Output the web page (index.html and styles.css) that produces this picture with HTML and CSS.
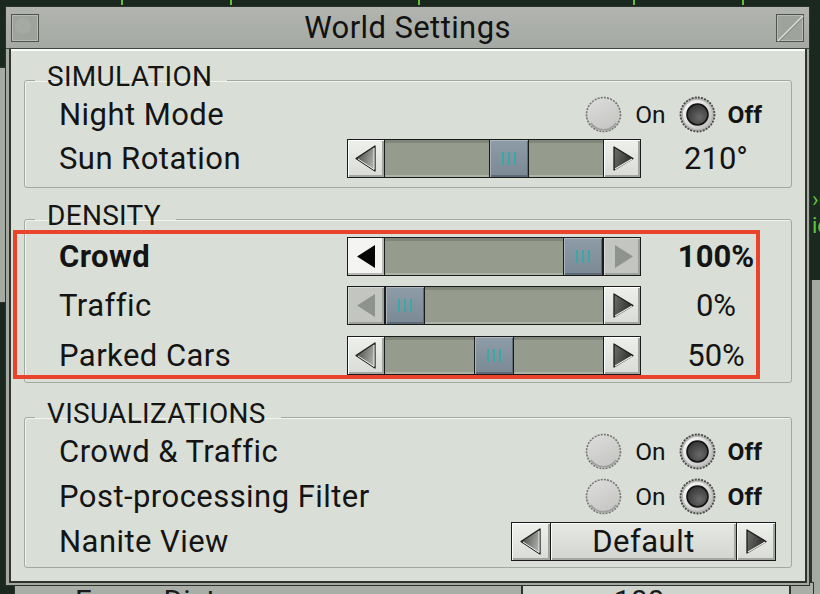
FILE: index.html
```html
<!DOCTYPE html>
<html lang="en">
<head>
<meta charset="utf-8">
<title>World Settings</title>
<link rel="stylesheet" href="styles.css">
</head>
<body>
<svg class="defs" width="0" height="0" aria-hidden="true">
  <defs>
    <linearGradient id="gl" x1="0" y1="0" x2="1" y2="0.4">
      <stop offset="0" stop-color="#3a3b39"/>
      <stop offset="1" stop-color="#a9aba7"/>
    </linearGradient>
    <linearGradient id="gr" x1="0" y1="0" x2="1" y2="0.3">
      <stop offset="0" stop-color="#6e706c"/>
      <stop offset="1" stop-color="#2e2f2d"/>
    </linearGradient>
    <radialGradient id="gdot" cx="0.6" cy="0.65" r="0.7">
      <stop offset="0" stop-color="#6a6a6a"/>
      <stop offset="1" stop-color="#323232"/>
    </radialGradient>
    <linearGradient id="gring" x1="0" y1="0" x2="1" y2="1">
      <stop offset="0" stop-color="#ffffff"/>
      <stop offset="1" stop-color="#b9b9b7"/>
    </linearGradient>
    <linearGradient id="goff" x1="0" y1="0" x2="0.6" y2="1">
      <stop offset="0" stop-color="#dededc"/>
      <stop offset="1" stop-color="#c6c6c4"/>
    </linearGradient>
  </defs>
</svg>

<div class="bg-top"><span class="tick t1"></span><span class="tick t2"></span><span class="tick t3"></span><span class="tick t4"></span><span class="tick t5"></span></div>
<div class="bg-win bg-left"></div>
<div class="bg-win bg-right"><span class="bg-green g1">›(</span><span class="bg-green g2">ie</span></div>
<div class="bg-win bg-bottom"><span class="bg-label">Focus Distance</span><span class="bg-box">100 m</span></div>

<div class="window">
  <div class="titlebar">
    <span class="tb-btn">
      <svg width="28" height="28" viewBox="0 0 28 28"><rect x="0.5" y="0.5" width="27" height="27" fill="#9ea39c" stroke="#50544f"/><rect x="1.5" y="1.5" width="25" height="25" fill="none" stroke="#b7bbb5"/><circle cx="12" cy="12" r="8" fill="#a5aaa3"/></svg>
    </span>
    <span class="title">World Settings</span>
    <span class="tb-btn">
      <svg width="28" height="28" viewBox="0 0 28 28"><rect x="0.5" y="0.5" width="27" height="27" fill="#9ea39c" stroke="#50544f"/><rect x="1.5" y="1.5" width="25" height="25" fill="none" stroke="#b7bbb5"/><line x1="2" y1="27" x2="27" y2="2" stroke="#dfe2dd" stroke-width="1.6"/><line x1="3" y1="27.5" x2="27.5" y2="3" stroke="#6c706b" stroke-width="0.8"/></svg>
    </span>
  </div>

  <div class="panel">
    <fieldset class="group group-sim">
      <legend>SIMULATION</legend>
      <div class="row row-radio first">
        <span class="label">Night Mode</span>
        <div class="radios">
          <svg class="radio" width="37" height="37" viewBox="0 0 37 37"><circle cx="18.5" cy="18.5" r="17" fill="url(#goff)" stroke="#767674" stroke-width="1.6" stroke-dasharray="2 1.2"/><path d="M6 27 A15 15 0 0 0 31 27" fill="none" stroke="#9f9f9d" stroke-width="1.5"/></svg>
          <span class="opt">On</span>
          <svg class="radio" width="37" height="37" viewBox="0 0 37 37"><circle cx="18.5" cy="18.5" r="17" fill="#b8b8b6" stroke="#4a4a48" stroke-width="1.8" stroke-dasharray="2 1.2"/><circle cx="18.5" cy="18.5" r="14.5" fill="url(#gring)"/><circle cx="18.5" cy="18.5" r="10.5" fill="url(#gdot)" stroke="#141414" stroke-width="1.6"/></svg>
          <span class="opt sel">Off</span>
        </div>
      </div>
      <div class="row row-slider">
        <span class="label">Sun Rotation</span>
        <div class="slider">
          <span class="sbtn"><svg width="37" height="37" viewBox="0 0 37 37"><polygon points="27,6 8,18.5 27,31" fill="url(#gl)" stroke="#1c1c1c" stroke-width="1.3" stroke-linejoin="round"/><polyline points="26,8 26,29.5 10,19" fill="none" stroke="#f2f2f0" stroke-width="1"/></svg></span>
          <span class="track"><span class="thumb" style="--p:0.583"><i></i><i></i><i></i></span></span>
          <span class="sbtn right"><svg width="37" height="37" viewBox="0 0 37 37"><polygon points="10,7 29,18.5 10,30" fill="url(#gr)" stroke="#1c1c1c" stroke-width="1.3" stroke-linejoin="round"/><line x1="11" y1="29" x2="28" y2="19" stroke="#f4f4f2" stroke-width="1.2"/></svg></span>
        </div>
        <span class="value">210°</span>
      </div>
    </fieldset>

    <fieldset class="group group-den">
      <legend>DENSITY</legend>
      <div class="row row-slider first">
        <span class="label strong">Crowd</span>
        <div class="slider">
          <span class="sbtn active"><svg width="37" height="37" viewBox="0 0 37 37"><polygon points="27,7 9,18.5 27,30" fill="#050505"/></svg></span>
          <span class="track"><span class="thumb" style="--p:1"><i></i><i></i><i></i></span></span>
          <span class="sbtn right disabled"><svg width="37" height="37" viewBox="0 0 37 37"><polygon points="11,7 29,18.5 11,30" fill="#8f938d"/></svg></span>
        </div>
        <span class="value strong">100%</span>
      </div>
      <div class="row row-slider second">
        <span class="label">Traffic</span>
        <div class="slider">
          <span class="sbtn disabled"><svg width="37" height="37" viewBox="0 0 37 37"><polygon points="27,7 9,18.5 27,30" fill="#8f938d"/></svg></span>
          <span class="track"><span class="thumb" style="--p:0"><i></i><i></i><i></i></span></span>
          <span class="sbtn right"><svg width="37" height="37" viewBox="0 0 37 37"><polygon points="10,7 29,18.5 10,30" fill="url(#gr)" stroke="#1c1c1c" stroke-width="1.3" stroke-linejoin="round"/><line x1="11" y1="29" x2="28" y2="19" stroke="#f4f4f2" stroke-width="1.2"/></svg></span>
        </div>
        <span class="value">0%</span>
      </div>
      <div class="row row-slider third">
        <span class="label">Parked Cars</span>
        <div class="slider">
          <span class="sbtn"><svg width="37" height="37" viewBox="0 0 37 37"><polygon points="27,6 8,18.5 27,31" fill="url(#gl)" stroke="#1c1c1c" stroke-width="1.3" stroke-linejoin="round"/><polyline points="26,8 26,29.5 10,19" fill="none" stroke="#f2f2f0" stroke-width="1"/></svg></span>
          <span class="track"><span class="thumb" style="--p:0.5"><i></i><i></i><i></i></span></span>
          <span class="sbtn right"><svg width="37" height="37" viewBox="0 0 37 37"><polygon points="10,7 29,18.5 10,30" fill="url(#gr)" stroke="#1c1c1c" stroke-width="1.3" stroke-linejoin="round"/><line x1="11" y1="29" x2="28" y2="19" stroke="#f4f4f2" stroke-width="1.2"/></svg></span>
        </div>
        <span class="value">50%</span>
      </div>
    </fieldset>

    <fieldset class="group group-vis">
      <legend>VISUALIZATIONS</legend>
      <div class="row row-radio first">
        <span class="label">Crowd &amp; Traffic</span>
        <div class="radios">
          <svg class="radio" width="37" height="37" viewBox="0 0 37 37"><circle cx="18.5" cy="18.5" r="17" fill="url(#goff)" stroke="#767674" stroke-width="1.6" stroke-dasharray="2 1.2"/><path d="M6 27 A15 15 0 0 0 31 27" fill="none" stroke="#9f9f9d" stroke-width="1.5"/></svg>
          <span class="opt">On</span>
          <svg class="radio" width="37" height="37" viewBox="0 0 37 37"><circle cx="18.5" cy="18.5" r="17" fill="#b8b8b6" stroke="#4a4a48" stroke-width="1.8" stroke-dasharray="2 1.2"/><circle cx="18.5" cy="18.5" r="14.5" fill="url(#gring)"/><circle cx="18.5" cy="18.5" r="10.5" fill="url(#gdot)" stroke="#141414" stroke-width="1.6"/></svg>
          <span class="opt sel">Off</span>
        </div>
      </div>
      <div class="row row-radio second">
        <span class="label">Post-processing Filter</span>
        <div class="radios">
          <svg class="radio" width="37" height="37" viewBox="0 0 37 37"><circle cx="18.5" cy="18.5" r="17" fill="url(#goff)" stroke="#767674" stroke-width="1.6" stroke-dasharray="2 1.2"/><path d="M6 27 A15 15 0 0 0 31 27" fill="none" stroke="#9f9f9d" stroke-width="1.5"/></svg>
          <span class="opt">On</span>
          <svg class="radio" width="37" height="37" viewBox="0 0 37 37"><circle cx="18.5" cy="18.5" r="17" fill="#b8b8b6" stroke="#4a4a48" stroke-width="1.8" stroke-dasharray="2 1.2"/><circle cx="18.5" cy="18.5" r="14.5" fill="url(#gring)"/><circle cx="18.5" cy="18.5" r="10.5" fill="url(#gdot)" stroke="#141414" stroke-width="1.6"/></svg>
          <span class="opt sel">Off</span>
        </div>
      </div>
      <div class="row row-select third">
        <span class="label">Nanite View</span>
        <div class="dropdown">
          <span class="sbtn"><svg width="39" height="37" viewBox="0 0 39 37"><polygon points="28,6 9,18.5 28,31" fill="url(#gl)" stroke="#1c1c1c" stroke-width="1.3" stroke-linejoin="round"/><polyline points="27,8 27,29.5 11,19" fill="none" stroke="#f2f2f0" stroke-width="1"/></svg></span>
          <span class="dd-value">Default</span>
          <span class="sbtn right"><svg width="39" height="37" viewBox="0 0 39 37"><polygon points="10,7 29,18.5 10,30" fill="url(#gr)" stroke="#1c1c1c" stroke-width="1.3" stroke-linejoin="round"/><line x1="11" y1="29" x2="28" y2="19" stroke="#f4f4f2" stroke-width="1.2"/></svg></span>
        </div>
      </div>
    </fieldset>
  </div>
</div>

<div class="highlight"></div>
</body>
</html>
```

FILE: styles.css
```css
* { box-sizing: border-box; }
html, body { margin: 0; }
body {
  width: 820px;
  height: 594px;
  overflow: hidden;
  position: relative;
  background: #1b2820;
  font-family: Roboto, "Liberation Sans", sans-serif;
  color: #141414;
  padding: 6px 0 0 5px;
}
.defs { position: absolute; width: 0; height: 0; }

/* background desktop bits */
.bg-top { position: absolute; left: 0; top: 0; width: 820px; height: 6px; }
.tick { position: absolute; top: 0; width: 2px; height: 5px; background: #5fc23a; }
.t1 { left: 121px; } .t2 { left: 230px; } .t3 { left: 418px; } .t4 { left: 633px; } .t5 { left: 742px; }
.bg-win { position: absolute; background: #a5aaa3; border: 1px solid #2e332e; }
.bg-left { left: -100px; top: 67px; width: 109px; height: 236px; }
.bg-right { left: 806px; top: 0; width: 100px; height: 600px; background: #1b2820; border: 0; }
.bg-right::after { content: ""; position: absolute; left: 4px; top: 280px; width: 20px; height: 320px; background: #a5aaa3; border-left: 2px solid #2e332e; }
.bg-green { position: absolute; left: 6px; color: #5fc23a; font-size: 22px; line-height: 24px; white-space: nowrap; }
.g1 { top: 188px; } .g2 { top: 214px; }
.bg-bottom { left: 14px; top: 582px; width: 800px; height: 40px; background: #a9aea7; }
.bg-label { position: absolute; left: 60px; top: 3px; font-size: 30px; line-height: 30px; color: #1a1a1a; }
.bg-box { position: absolute; left: 506px; top: 0; width: 270px; height: 40px; border-left: 2px solid #2e332e; border-right: 2px solid #2e332e; background: #cfd4cc; text-align: center; font-size: 30px; line-height: 36px; color: #1a1a1a; }

/* window */
.window {
  position: relative;
  z-index: 1;
  width: 805px;
  height: 580px;
  display: flex;
  flex-direction: column;
  background: #a3a8a1;
  border: 1px solid #2d322d;
}
.titlebar {
  height: 42px;
  flex: none;
  display: flex;
  align-items: center;
  justify-content: space-between;
  padding: 0 5px;
  background: linear-gradient(#b2b5af, #a5a9a3);
  border-bottom: 1px solid #40453f;
}
.tb-btn { width: 28px; height: 28px; display: block; }
.tb-btn svg { display: block; }
.title { font-size: 31px; letter-spacing: 0.4px; line-height: 34px; color: #121212; }

.panel {
  flex: 1;
  margin: 0 2px 2px 3px;
  background: #d9dfd6;
  border: 2px solid #2f342f;
  border-top: 0;
  box-shadow: inset 0 2px 0 #fbfcfa;
  display: flex;
  flex-direction: column;
}

/* groups */
.group {
  margin: 0 13px;
  padding: 0;
  min-width: 0;
  border: 1px solid #a2a9a0;
  border-radius: 3px;
  box-shadow: inset 1px 1px 0 #f1f4ef;
}
.group legend {
  margin-left: 10px;
  padding: 0 15px 6px 12px;
  font-size: 28px;
  letter-spacing: 0.3px;
  line-height: 30px;
  color: #151515;
}
.group-sim { margin-top: 13px; padding-bottom: 9px; }
.group-den { margin-top: 13px; padding-bottom: 7px; }
.group-vis { margin-top: 16px; padding-bottom: 6px; }

.row { display: flex; align-items: center; padding-left: 34px; }
.label { flex: 1; font-size: 31px; letter-spacing: 0.45px; line-height: 36px; white-space: nowrap; }
.strong { font-weight: 700; }

.row-radio { height: 37px; padding-right: 29px; }
.row-radio.first { margin-top: -2px; }
.group-sim .row-slider { margin-top: 6px; }
.group-vis .row-radio.second { margin-top: 8px; }
.row-select { margin-top: 7px; padding-right: 15px; }
.group-den .row-slider.first { margin-top: 0; }
.group-den .row-slider.second { margin-top: 10px; }
.group-den .row-slider.third { margin-top: 11px; }

/* radios */
.radios { display: flex; align-items: center; }
.radio { display: block; flex: none; }
.opt { font-size: 24.5px; line-height: 28px; margin: 0 13px 0 13px; }
.opt.sel { font-weight: 700; margin: 0 0 0 12px; }

/* slider */
.slider {
  width: 294px;
  height: 39px;
  flex: none;
  display: flex;
  border: 1px solid #1b1b1b;
  background: #1b1b1b;
}
.sbtn {
  width: 37px;
  flex: none;
  display: block;
  background: linear-gradient(#eef0ec, #d9dbd7);
  box-shadow: inset 1px 1px 0 #ffffff, inset -2px -2px 0 #a2a5a0;
  border-right: 1px solid #1b1b1b;
}
.sbtn svg { display: block; }
.sbtn.right { border-right: 0; border-left: 1px solid #1b1b1b; }
.sbtn.active { background: #f4f5f2; box-shadow: inset -2px -2px 0 #b8bab6; }
.sbtn.disabled { background: #c3c5c1; box-shadow: inset 1px 1px 0 #d6d8d4, inset -2px -2px 0 #9da09b; }
.track {
  flex: 1;
  display: flex;
  background: #959c8d;
  box-shadow: inset 0 3px 0 #80877a, inset 0 -2px 0 #adb4a5;
}
.thumb {
  width: 40px;
  margin-left: calc(var(--p) * (100% - 40px));
  display: flex;
  align-items: center;
  justify-content: center;
  gap: 4px;
  background: linear-gradient(#8e9ca8, #7b8995);
  border-left: 1px solid #1b1b1b;
  border-right: 1px solid #1b1b1b;
  box-shadow: inset 1px 1px 0 #a9b5bf, inset -1px -2px 0 #5e6a75;
}
.thumb i { display: block; width: 2px; height: 13px; background: #3aa8a7; }
.value { width: 150px; flex: none; text-align: center; font-size: 31px; line-height: 36px; }

/* dropdown */
.dropdown {
  width: 265px;
  height: 39px;
  flex: none;
  display: flex;
  border: 1px solid #1b1b1b;
  background: #1b1b1b;
}
.dropdown .sbtn { width: 39px; }
.dd-value {
  flex: 1;
  text-align: center;
  font-size: 31px;
  letter-spacing: 0.5px;
  line-height: 37px;
  background: linear-gradient(#e6e8e4, #d3d5d1);
  box-shadow: inset 1px 1px 0 #fafbf9, inset -2px -2px 0 #a6a9a4;
}

/* annotation overlay */
.highlight {
  position: absolute;
  z-index: 2;
  left: 13px;
  top: 230px;
  width: 747px;
  height: 149px;
  border: 4px solid #e9432b;
}
```
